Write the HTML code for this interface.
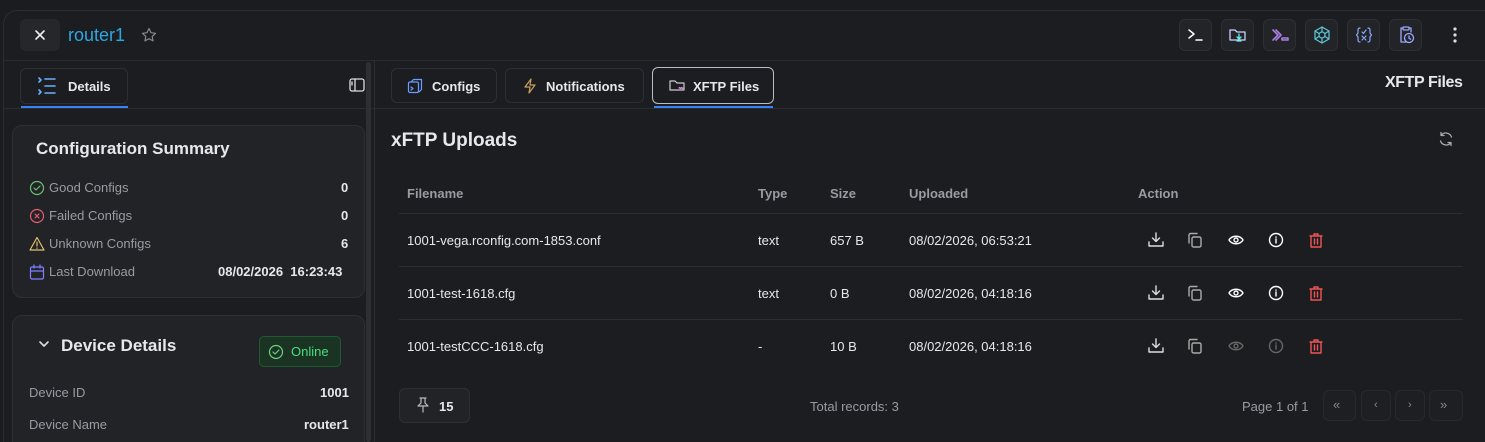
<!DOCTYPE html>
<html><head><meta charset="utf-8"><style>
*{box-sizing:border-box;margin:0;padding:0}
html,body{width:1485px;height:442px;overflow:hidden}
body{background:#1b1c20;font-family:"Liberation Sans",sans-serif;color:#e8e8ea;position:relative}
.a{position:absolute}
.frame{left:3px;top:10px;width:1482px;height:432px;border:1px solid #2c2d31;border-bottom:none;border-right:none;border-radius:14px 0 0 0;background:#1c1d21}
.btn{position:absolute;border:1px solid #2e2f34;border-radius:6px;background:#232428}
.t{position:absolute;white-space:nowrap;font-size:13px}
.b{font-weight:bold}
.g{color:#9a9ba1}
.hl{position:absolute;height:1px;background:#2c2d32}
svg{position:absolute;fill:none;stroke-linecap:round;stroke-linejoin:round}
</style></head><body>
<div class="a frame"></div>
<div class="btn" style="left:20px;top:19px;width:40px;height:32px;background:#26272b;border-color:#26272b"></div>
<svg style="left:34px;top:29px" width="12" height="12" stroke="#eee" stroke-width="1.6"><path d="M2 2L10 10M10 2L2 10"/></svg>
<div class="t" style="left:68px;top:25px;font-size:18px;color:#2ea7e0">router1</div>
<svg style="left:141px;top:27px" width="16" height="16" stroke="#888" stroke-width="1.2"><path d="M8 1.5l2 4.2 4.5.6-3.3 3.1.8 4.5L8 11.7l-4 2.2.8-4.5L1.5 6.3 6 5.7z"/></svg>
<div class="hl" style="left:4px;top:60px;width:1481px;background:#2a2b30"></div>
<div class="btn" style="left:1179px;top:19px;width:33px;height:32px"></div>
<div class="btn" style="left:1221px;top:19px;width:33px;height:32px"></div>
<div class="btn" style="left:1263px;top:19px;width:33px;height:32px"></div>
<div class="btn" style="left:1305px;top:19px;width:33px;height:32px"></div>
<div class="btn" style="left:1347px;top:19px;width:33px;height:32px"></div>
<div class="btn" style="left:1389px;top:19px;width:33px;height:32px"></div>
<svg style="left:1187px;top:27px" width="18" height="16" stroke="#fff" stroke-width="1.5"><path d="M2 3l5 4-5 4M9 13h6"/></svg>
<svg style="left:1229px;top:27px" width="18" height="16" stroke="#c8d0ff" stroke-width="1.3"><path d="M1 3h5l2 2h8v8H1z"/><path d="M10 7v5M8 10l2 2 2-2M8 14h4" stroke="#6ee"/></svg>
<svg style="left:1271px;top:27px" width="18" height="16" stroke="#a77ee0" stroke-width="1.6"><path d="M2 3l5 5-5 5M5 3l5 5-5 5"/><rect x="11" y="11" width="6" height="2"/></svg>
<svg style="left:1313px;top:26px" width="18" height="18" stroke="#5cc8d8" stroke-width="1.2"><path d="M9 1l7 4v8l-7 4-7-4V5z"/><circle cx="9" cy="9" r="3"/><path d="M9 1v5M9 12v5M2 5l4 2.5M16 5l-4 2.5M2 13l4-2.5M16 13l-4-2.5"/></svg>
<svg style="left:1355px;top:26px" width="18" height="18" stroke="#8aa8ff" stroke-width="1.2"><path d="M5 2C3 2 3 3 3 5v2l-1.5 2L3 11v2c0 2 0 3 2 3M13 2c2 0 2 1 2 3v2l1.5 2L15 11v2c0 2 0 3-2 3M7 6l1.5 1.5L11 4M7 14l4-4M7 10l4 4"/></svg>
<svg style="left:1397px;top:25px" width="18" height="20" stroke="#9aa8ff" stroke-width="1.3"><path d="M6 3H4v14h5M12 3h2v4"/><rect x="6" y="2" width="6" height="3" rx="1"/><circle cx="12" cy="13" r="4.5"/><path d="M12 11v2.2l1.5 1"/></svg>
<svg style="left:1451px;top:27px" width="8" height="16" fill="#ddd" stroke="none"><circle cx="4" cy="2" r="1.6" fill="#ddd"/><circle cx="4" cy="8" r="1.6" fill="#ddd"/><circle cx="4" cy="14" r="1.6" fill="#ddd"/></svg>
<div class="hl" style="left:4px;top:108px;width:1481px"></div>
<div class="btn" style="left:20px;top:68px;width:108px;height:36px;background:#1c1d21"></div>
<div class="a" style="left:21px;top:106px;width:107px;height:2px;background:#3b82f6"></div>
<svg style="left:37px;top:76px" width="20" height="20" stroke="#6ab0ff" stroke-width="1.6"><path d="M2 2l2 2-2 2M2 14l2 2-2 2M8 3h10M8 10h10M8 17h10"/></svg>
<div class="t b" style="left:68px;top:79px">Details</div>
<svg style="left:349px;top:77px" width="16" height="16" stroke="#ddd" stroke-width="1.3"><rect x="1" y="2" width="14" height="12" rx="2"/><path d="M6 2v12M3 5v3"/></svg>
<div class="a" style="left:366px;top:62px;width:5px;height:380px;background:#2e2f33;border-radius:3px"></div>
<div class="a" style="left:374px;top:60px;width:1px;height:382px;background:#2c2d32"></div>
<div class="btn" style="left:12px;top:125px;width:353px;height:173px;border-radius:10px;background:#222327"></div>
<div class="t b" style="left:36px;top:139px;font-size:17px">Configuration Summary</div>
<svg style="left:29px;top:180px" width="16" height="16" stroke="#6cc070" stroke-width="1.2"><circle cx="8" cy="8" r="6.5"/><path d="M5 8l2 2 4-4"/></svg>
<svg style="left:29px;top:208px" width="16" height="16" stroke="#e06070" stroke-width="1.2"><circle cx="8" cy="8" r="6.5"/><path d="M6 6l4 4M10 6l-4 4"/></svg>
<svg style="left:29px;top:236px" width="16" height="16" stroke="#e0c070" stroke-width="1.2"><path d="M8 1.5L15 14H1z"/><path d="M8 6v4M8 12v.3"/></svg>
<svg style="left:29px;top:264px" width="16" height="16" stroke="#8080ff" stroke-width="1.2"><rect x="1.5" y="3" width="13" height="12" rx="1.5"/><path d="M1.5 7h13M5 1v3M11 1v3"/></svg>
<div class="t g" style="left:49px;top:180px">Good Configs</div>
<div class="t g" style="left:49px;top:208px">Failed Configs</div>
<div class="t g" style="left:49px;top:236px">Unknown Configs</div>
<div class="t g" style="left:49px;top:264px">Last Download</div>
<div class="t b" style="left:341px;top:180px">0</div>
<div class="t b" style="left:341px;top:208px">0</div>
<div class="t b" style="left:341px;top:236px">6</div>
<div class="t b" style="left:218px;top:264px">08/02/2026&nbsp;&nbsp;16:23:43</div>
<div class="btn" style="left:12px;top:315px;width:353px;height:140px;border-radius:10px;background:#222327"></div>
<svg style="left:38px;top:339px" width="12" height="10" stroke="#ddd" stroke-width="1.6"><path d="M2 3l4 4 4-4"/></svg>
<div class="t b" style="left:61px;top:336px;font-size:17px">Device Details</div>
<div class="a" style="left:259px;top:336px;width:82px;height:31px;border:1px solid #1f5a33;border-radius:5px;background:#1a3323"></div>
<svg style="left:268px;top:344px" width="16" height="16" stroke="#6cd080" stroke-width="1.2"><circle cx="8" cy="8" r="6.5"/><path d="M5 8l2 2 4-4"/></svg>
<div class="t" style="left:291px;top:344px;color:#4ade80">Online</div>
<div class="t g" style="left:29px;top:385px">Device ID</div>
<div class="t b" style="left:320px;top:385px">1001</div>
<div class="t g" style="left:29px;top:417px">Device Name</div>
<div class="t b" style="left:304px;top:417px">router1</div>
<div class="btn" style="left:391px;top:68px;width:106px;height:35px;background:#1c1d21"></div>
<div class="btn" style="left:505px;top:68px;width:139px;height:35px;background:#1c1d21"></div>
<div class="btn" style="left:652px;top:67px;width:122px;height:37px;background:#1c1d21;border-color:#b8bcc4"></div>
<div class="a" style="left:654px;top:106px;width:119px;height:2px;background:#3b82f6"></div>
<svg style="left:407px;top:78px" width="16" height="16" stroke="#6a9cff" stroke-width="1.2"><rect x="1.5" y="4" width="10" height="10.5" rx="1.5"/><path d="M4 4l2.5-2.5h8v10L12 14"/><path d="M4 9l2 1.5L4 12"/></svg>
<div class="t b" style="left:432px;top:79px">Configs</div>
<svg style="left:523px;top:78px" width="14" height="16" stroke="#c9a060" stroke-width="1.2"><path d="M8 1L2 9h5l-1 6 6-8H7z"/></svg>
<div class="t b" style="left:546px;top:79px">Notifications</div>
<svg style="left:669px;top:78px" width="18" height="16" stroke="#ccc" stroke-width="1.2"><path d="M1 3h5l2 2h7v7H1z"/><path d="M10 10c1-2 1 2 2 0s1 2 2 0" stroke="#e08ae0"/></svg>
<div class="t b" style="left:693px;top:79px">XFTP Files</div>
<div class="t b" style="left:1385px;top:74px;font-size:16px;letter-spacing:-0.4px">XFTP Files</div>
<div class="t b" style="left:391px;top:130px;font-size:19px">xFTP Uploads</div>
<svg style="left:1438px;top:131px" width="16" height="16" stroke="#aaa" stroke-width="1.3"><path d="M13.5 6A6 6 0 0 0 3 4.5M2.5 10A6 6 0 0 0 13 11.5M3 1.5v3h3M13 14.5v-3h-3"/></svg>
<div class="t b g" style="left:407px;top:186px">Filename</div>
<div class="t b g" style="left:758px;top:186px">Type</div>
<div class="t b g" style="left:830px;top:186px">Size</div>
<div class="t b g" style="left:909px;top:186px">Uploaded</div>
<div class="t b g" style="left:1138px;top:186px">Action</div>
<div class="hl" style="left:399px;top:213px;width:1064px"></div>
<div class="hl" style="left:399px;top:266px;width:1064px"></div>
<div class="hl" style="left:399px;top:319px;width:1064px"></div>
<div class="t" style="left:407px;top:233px">1001-vega.rconfig.com-1853.conf</div>
<div class="t" style="left:758px;top:233px">text</div>
<div class="t" style="left:830px;top:233px">657 B</div>
<div class="t" style="left:909px;top:233px">08/02/2026, 06:53:21</div>
<div class="t" style="left:407px;top:286px">1001-test-1618.cfg</div>
<div class="t" style="left:758px;top:286px">text</div>
<div class="t" style="left:830px;top:286px">0 B</div>
<div class="t" style="left:909px;top:286px">08/02/2026, 04:18:16</div>
<div class="t" style="left:407px;top:339px">1001-testCCC-1618.cfg</div>
<div class="t" style="left:758px;top:339px">-</div>
<div class="t" style="left:830px;top:339px">10 B</div>
<div class="t" style="left:909px;top:339px">08/02/2026, 04:18:16</div>
<svg style="left:1148px;top:232px" width="180" height="125" stroke-width="1.4">
 <g><path d="M8 1v8M4.5 6L8 9.5 11.5 6M1 10v4h14v-4" stroke="#ddd"/><rect x="44" y="5" width="9" height="10" rx="1.5" stroke="#aaa"/><path d="M41 11V3a1.5 1.5 0 0 1 1.5-1.5H49" stroke="#aaa"/></g>
 <g transform="translate(0,53)"><path d="M8 1v8M4.5 6L8 9.5 11.5 6M1 10v4h14v-4" stroke="#ddd"/><rect x="44" y="5" width="9" height="10" rx="1.5" stroke="#aaa"/><path d="M41 11V3a1.5 1.5 0 0 1 1.5-1.5H49" stroke="#aaa"/></g>
 <g transform="translate(0,106)"><path d="M8 1v8M4.5 6L8 9.5 11.5 6M1 10v4h14v-4" stroke="#ddd"/><rect x="44" y="5" width="9" height="10" rx="1.5" stroke="#aaa"/><path d="M41 11V3a1.5 1.5 0 0 1 1.5-1.5H49" stroke="#aaa"/></g>
 <g stroke="#fff"><path d="M81 8c3-5 11-5 14 0-3 5-11 5-14 0z"/><circle cx="88" cy="8" r="2"/><circle cx="128" cy="8" r="6.5"/><path d="M128 7v4M128 5v.2"/></g>
 <g stroke="#fff" transform="translate(0,53)"><path d="M81 8c3-5 11-5 14 0-3 5-11 5-14 0z"/><circle cx="88" cy="8" r="2"/><circle cx="128" cy="8" r="6.5"/><path d="M128 7v4M128 5v.2"/></g>
 <g stroke="#666" transform="translate(0,106)"><path d="M81 8c3-5 11-5 14 0-3 5-11 5-14 0z"/><circle cx="88" cy="8" r="2"/><circle cx="128" cy="8" r="6.5"/><path d="M128 7v4M128 5v.2"/></g>
 <g stroke="#e55"><path d="M162 4h12M166 4V2h4v2M163 4v11h10V4M166.5 7v5M169.5 7v5"/></g>
 <g stroke="#e55" transform="translate(0,53)"><path d="M162 4h12M166 4V2h4v2M163 4v11h10V4M166.5 7v5M169.5 7v5"/></g>
 <g stroke="#e55" transform="translate(0,106)"><path d="M162 4h12M166 4V2h4v2M163 4v11h10V4M166.5 7v5M169.5 7v5"/></g>
</svg>
<div class="btn" style="left:399px;top:388px;width:71px;height:35px;background:#222327"></div>
<svg style="left:416px;top:397px" width="14" height="16" stroke="#bbb" stroke-width="1.2"><path d="M4 1h6M5 1v5L2 9h10L9 6V1M7 9v6"/></svg>
<div class="t b" style="left:439px;top:399px">15</div>
<div class="t g" style="left:810px;top:399px">Total records: 3</div>
<div class="t g" style="left:1242px;top:399px">Page 1 of 1</div>
<div class="btn" style="left:1323px;top:390px;width:33px;height:31px;background:#1e1f23;border-color:#28292d"></div>
<div class="btn" style="left:1361px;top:390px;width:30px;height:31px;background:#1e1f23;border-color:#28292d"></div>
<div class="btn" style="left:1395px;top:390px;width:30px;height:31px;background:#1e1f23;border-color:#28292d"></div>
<div class="btn" style="left:1429px;top:390px;width:34px;height:31px;background:#1e1f23;border-color:#28292d"></div>
<div class="t" style="left:1333px;top:397px;color:#888">«</div>
<div class="t" style="left:1374px;top:399px;color:#888;font-size:11px">‹</div>
<div class="t" style="left:1408px;top:399px;color:#888;font-size:11px">›</div>
<div class="t" style="left:1440px;top:397px;color:#888">»</div>
</body></html>
